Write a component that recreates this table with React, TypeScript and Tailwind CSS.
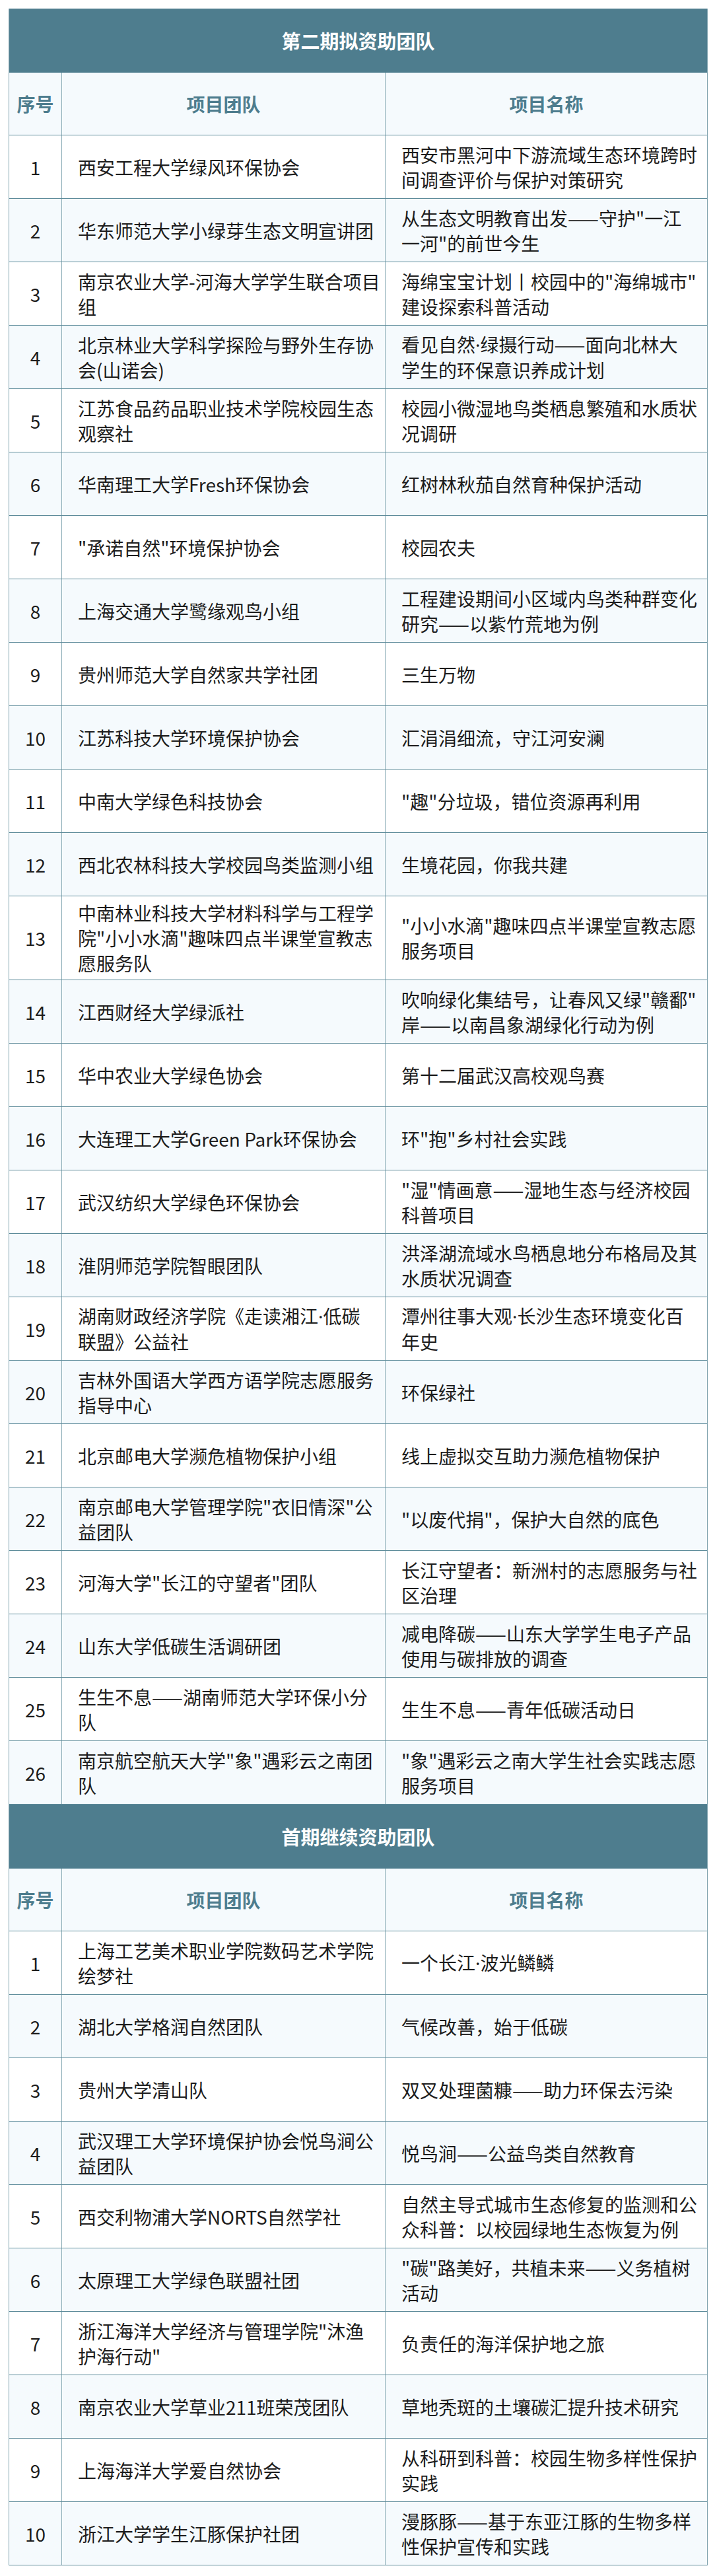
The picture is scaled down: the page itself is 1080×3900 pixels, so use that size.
import { Fragment } from "react";

type Row = [string, string];

const secondRound: Row[] = [
  ["西安工程大学绿风环保协会", "西安市黑河中下游流域生态环境跨时\n间调查评价与保护对策研究"],
  ["华东师范大学小绿芽生态文明宣讲团", "从生态文明教育出发——守护\"一江\n一河\"的前世今生"],
  ["南京农业大学-河海大学学生联合项目\n组", "海绵宝宝计划丨校园中的\"海绵城市\"\n建设探索科普活动"],
  ["北京林业大学科学探险与野外生存协\n会(山诺会)", "看见自然·绿摄行动——面向北林大\n学生的环保意识养成计划"],
  ["江苏食品药品职业技术学院校园生态\n观察社", "校园小微湿地鸟类栖息繁殖和水质状\n况调研"],
  ["华南理工大学Fresh环保协会", "红树林秋茄自然育种保护活动"],
  ["\"承诺自然\"环境保护协会", "校园农夫"],
  ["上海交通大学鹭缘观鸟小组", "工程建设期间小区域内鸟类种群变化\n研究——以紫竹荒地为例"],
  ["贵州师范大学自然家共学社团", "三生万物"],
  ["江苏科技大学环境保护协会", "汇涓涓细流，守江河安澜"],
  ["中南大学绿色科技协会", "\"趣\"分垃圾，错位资源再利用"],
  ["西北农林科技大学校园鸟类监测小组", "生境花园，你我共建"],
  ["中南林业科技大学材料科学与工程学\n院\"小小水滴\"趣味四点半课堂宣教志\n愿服务队", "\"小小水滴\"趣味四点半课堂宣教志愿\n服务项目"],
  ["江西财经大学绿派社", "吹响绿化集结号，让春风又绿\"赣鄱\"\n岸——以南昌象湖绿化行动为例"],
  ["华中农业大学绿色协会", "第十二届武汉高校观鸟赛"],
  ["大连理工大学Green Park环保协会", "环\"抱\"乡村社会实践"],
  ["武汉纺织大学绿色环保协会", "\"湿\"情画意——湿地生态与经济校园\n科普项目"],
  ["淮阴师范学院智眼团队", "洪泽湖流域水鸟栖息地分布格局及其\n水质状况调查"],
  ["湖南财政经济学院《走读湘江·低碳\n联盟》公益社", "潭州往事大观·长沙生态环境变化百\n年史"],
  ["吉林外国语大学西方语学院志愿服务\n指导中心", "环保绿社"],
  ["北京邮电大学濒危植物保护小组", "线上虚拟交互助力濒危植物保护"],
  ["南京邮电大学管理学院\"衣旧情深\"公\n益团队", "\"以废代捐\"，保护大自然的底色"],
  ["河海大学\"长江的守望者\"团队", "长江守望者：新洲村的志愿服务与社\n区治理"],
  ["山东大学低碳生活调研团", "减电降碳——山东大学学生电子产品\n使用与碳排放的调查"],
  ["生生不息——湖南师范大学环保小分\n队", "生生不息——青年低碳活动日"],
  ["南京航空航天大学\"象\"遇彩云之南团\n队", "\"象\"遇彩云之南大学生社会实践志愿\n服务项目"],
];

const continued: Row[] = [
  ["上海工艺美术职业学院数码艺术学院\n绘梦社", "一个长江·波光鳞鳞"],
  ["湖北大学格润自然团队", "气候改善，始于低碳"],
  ["贵州大学清山队", "双叉处理菌糠——助力环保去污染"],
  ["武汉理工大学环境保护协会悦鸟涧公\n益团队", "悦鸟涧——公益鸟类自然教育"],
  ["西交利物浦大学NORTS自然学社", "自然主导式城市生态修复的监测和公\n众科普：以校园绿地生态恢复为例"],
  ["太原理工大学绿色联盟社团", "\"碳\"路美好，共植未来——义务植树\n活动"],
  ["浙江海洋大学经济与管理学院\"沐渔\n护海行动\"", "负责任的海洋保护地之旅"],
  ["南京农业大学草业211班荣茂团队", "草地秃斑的土壤碳汇提升技术研究"],
  ["上海海洋大学爱自然协会", "从科研到科普：校园生物多样性保护\n实践"],
  ["浙江大学学生江豚保护社团", "漫豚豚——基于东亚江豚的生物多样\n性保护宣传和实践"],
];

// the middle dot is half width in the original, CJK font draws it full width
function Cell({ text }: { text: string }) {
  const parts = text.split("·");
  return (
    <>
      {parts.map((p, i) => (
        <Fragment key={i}>
          {i > 0 && <span className="font-['Noto_Sans',sans-serif]">·</span>}
          {p}
        </Fragment>
      ))}
    </>
  );
}

function Section({ title, rows }: { title: string; rows: Row[] }) {
  return (
    <div>
      <div className="flex h-[97px] items-center justify-center bg-[#4e7d8e] text-[29px] font-bold text-white">
        {title}
      </div>
      <div className="grid h-[95px] grid-cols-[79px_490px_488px] border-b border-[#5d8b9a] bg-[#f5fafd] text-[28px] font-bold text-[#4e7d8e]">
        <div className="flex items-center justify-center">序号</div>
        <div className="flex items-center justify-center border-l border-[#8aabb6]">项目团队</div>
        <div className="flex items-center justify-center border-l border-[#8aabb6]">项目名称</div>
      </div>
      {rows.map(([team, project], i) => (
        <div
          key={i}
          className={
            "grid min-h-[96px] grid-cols-[79px_490px_488px] border-b border-[#5d8b9a] text-[28px] leading-[38px] text-[#1c1c1c] " +
            (i % 2 === 1 ? "bg-[#f5fafd]" : "bg-white")
          }
        >
          <div className="flex items-center justify-center py-[6px]">{i + 1}</div>
          <div className="flex items-center border-l border-[#8aabb6] py-[6px] pl-[24px] pr-[4px]">
            <p className="whitespace-pre-line">
              <Cell text={team} />
            </p>
          </div>
          <div className="flex items-center border-l border-[#8aabb6] py-[6px] pl-[24px] pr-[4px]">
            <p className="whitespace-pre-line">
              <Cell text={project} />
            </p>
          </div>
        </div>
      ))}
    </div>
  );
}

export default function App() {
  return (
    <div className="min-h-[3900px] bg-white pl-[13px] pt-[13px] font-['Noto_Sans_CJK_SC',sans-serif]">
      <div className="w-[1059px] border-x border-[#7fa2ae]">
        <Section title="第二期拟资助团队" rows={secondRound} />
        <Section title="首期继续资助团队" rows={continued} />
      </div>
    </div>
  );
}
